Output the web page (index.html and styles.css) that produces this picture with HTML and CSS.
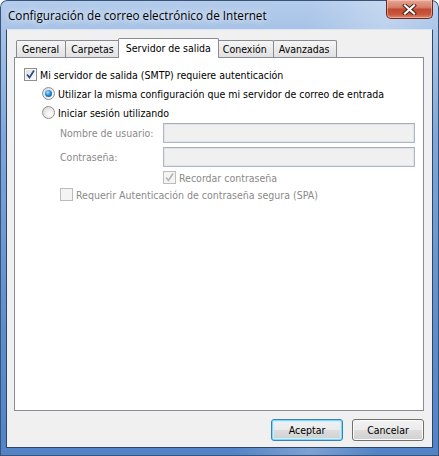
FILE: index.html
```html
<!DOCTYPE html>
<html lang="es">
<head>
<meta charset="utf-8">
<title>Configuración de correo electrónico de Internet</title>
<link rel="stylesheet" href="styles.css">
</head>
<body>
<div class="window">
  <div class="titlebar">
    <span class="title">Configuración de correo electrónico de Internet</span>
    <div class="close">
      <svg width="15" height="11" viewBox="0 0 15 11">
        <path d="M3 1.5 L12 9.5 M12 1.5 L3 9.5" stroke="#4a1a12" stroke-width="4" stroke-linecap="square"/>
        <path d="M3 1.5 L12 9.5 M12 1.5 L3 9.5" stroke="#ffffff" stroke-width="2.2" stroke-linecap="square"/>
      </svg>
    </div>
  </div>
  <div class="client">
    <div class="tabs">
      <div class="tab">General</div>
      <div class="tab">Carpetas</div>
      <div class="tab selected">Servidor de salida</div>
      <div class="tab">Conexión</div>
      <div class="tab">Avanzadas</div>
    </div>
    <div class="panel">
      <div class="row">
        <span class="cb">
          <svg width="11" height="11" viewBox="0 0 11 11"><path d="M2 5.5 L4.5 8.5 L9 1.5" fill="none" stroke="#2b4a86" stroke-width="1.7"/></svg>
        </span>
        <span>Mi servidor de salida (SMTP) requiere autenticación</span>
      </div>
      <div class="row indent">
        <span class="radio on"></span>
        <span>Utilizar la misma configuración que mi servidor de correo de entrada</span>
      </div>
      <div class="row indent">
        <span class="radio"></span>
        <span>Iniciar sesión utilizando</span>
      </div>
      <div class="form">
        <span class="lbl">Nombre de usuario:</span>
        <span class="input"></span>
        <span class="lbl">Contraseña:</span>
        <span class="input"></span>
        <span></span>
        <div class="sub">
          <span class="cb dis">
            <svg width="11" height="11" viewBox="0 0 11 11"><path d="M2 5.5 L4.5 8.5 L9 1.5" fill="none" stroke="#b4b4b4" stroke-width="1.6"/></svg>
          </span>
          <span class="gray">Recordar contraseña</span>
        </div>
      </div>
      <div class="sub spa">
        <span class="cb dis"></span>
        <span class="gray">Requerir Autenticación de contraseña segura (SPA)</span>
      </div>
    </div>
    <div class="buttons">
      <button class="btn default">Aceptar</button>
      <button class="btn">Cancelar</button>
    </div>
  </div>
</div>
</body>
</html>
```

FILE: styles.css
```css
html, body {
  margin: 0;
  padding: 0;
}
body {
  width: 439px;
  height: 456px;
  overflow: hidden;
  background: #ffffff;
  font-family: "DejaVu Sans Condensed", "DejaVu Sans", sans-serif;
  font-size: 10.5px;
  color: #000;
}
.window {
  box-sizing: border-box;
  width: 439px;
  height: 456px;
  display: flex;
  flex-direction: column;
  padding: 0 6px 8px 6px;
  border-radius: 7px 7px 0 0;
  background:
    linear-gradient(100deg, rgba(255,255,255,0) 60%, rgba(255,255,255,0.25) 75%, rgba(255,255,255,0) 88%),
    linear-gradient(180deg, #b5cdec 0, #a7c3e7 29px, #7ea6d8 140px, #5e8dcb 330px, #5183c6 100%);
  box-shadow: inset 0 0 0 1px #3a5478;
}
.titlebar {
  height: 29px;
  display: flex;
  justify-content: space-between;
  align-items: flex-start;
}
.title {
  margin: 7px 0 0 2px;
  font-family: "Open Sans", "Noto Sans", sans-serif;
  font-size: 11.7px;
  color: #000;
  text-shadow: 0 0 6px rgba(255,255,255,0.9), 0 0 10px rgba(255,255,255,0.7);
}
.close {
  box-sizing: border-box;
  width: 47px;
  height: 19px;
  display: flex;
  align-items: center;
  justify-content: center;
  border: 1px solid #6a2a20;
  border-top: none;
  border-radius: 0 0 5px 5px;
  background: linear-gradient(180deg, #e7a592 0%, #d6806b 40%, #c04a32 52%, #c9573d 80%, #e08a6e 100%);
  box-shadow: inset 0 0 0 1px rgba(255,220,210,0.45);
}
.client {
  flex: 1;
  display: flex;
  flex-direction: column;
  background: #f0f0f0;
  border: 1px solid #2f4566;
  border-top-color: #dce6f2;
  padding: 8px 8px 6px 7px;
}
.tabs {
  display: flex;
  align-items: flex-end;
  height: 19px;
  margin-left: 2px;
  position: relative;
  z-index: 1;
}
.tab {
  box-sizing: border-box;
  height: 17px;
  padding: 0 6px 0 5px;
  display: flex;
  align-items: center;
  border: 1px solid #898c95;
  border-bottom: none;
  border-radius: 2px 2px 0 0;
  background: linear-gradient(180deg, #f5f5f5 0%, #ebebeb 50%, #e1e1e1 100%);
  margin-left: -1px;
}
.tab:first-child {
  margin-left: 0;
}
.tab.selected {
  height: 20px;
  margin: 0 -2px -1px -3px;
  padding: 0 7px 2px 7px;
  background: #ffffff;
  position: relative;
  z-index: 2;
}
.tab.selected + .tab {
  margin-left: 0;
}
.panel {
  box-sizing: border-box;
  height: 354px;
  background: #ffffff;
  border: 1px solid #898c95;
  padding: 7px 0 0 9px;
}
.row {
  display: flex;
  align-items: center;
  gap: 3px;
  height: 19px;
}
.indent {
  margin-left: 18px;
}
.cb {
  box-sizing: border-box;
  width: 13px;
  height: 13px;
  flex: none;
  display: flex;
  align-items: center;
  justify-content: center;
  border: 1px solid #8e8f8f;
  background: linear-gradient(135deg, #dadbdc 0%, #f0f0f0 55%, #ffffff 100%);
  box-shadow: inset 0 0 0 1px #f6f6f6;
}
.cb.dis {
  border-color: #bcbcbc;
  background: #f4f4f4;
  box-shadow: none;
}
.radio {
  box-sizing: border-box;
  width: 13px;
  height: 13px;
  flex: none;
  border-radius: 50%;
  border: 1px solid #8e8f8f;
  background: radial-gradient(circle at 65% 65%, #ffffff 0%, #ececec 45%, #cfd0d1 100%);
  display: flex;
  align-items: center;
  justify-content: center;
}
.radio.on::after {
  content: "";
  width: 7px;
  height: 7px;
  border-radius: 50%;
  background: radial-gradient(circle at 40% 35%, #aee6ff 0%, #2b96e6 40%, #12539a 80%, #0e3d75 100%);
}
.form {
  display: grid;
  grid-template-columns: 103px 252px;
  grid-template-rows: 20px 20px 13px;
  row-gap: 4px;
  margin: 1px 0 0 36px;
}
.lbl {
  color: #8a8a8a;
  align-self: center;
}
.input {
  box-sizing: border-box;
  border: 1px solid #adb6c1;
  border-top-color: #a4adb8;
  background: #f0f0f0;
  box-shadow: inset 0 0 0 1px #dfe5ec;
}
.sub {
  display: flex;
  align-items: center;
  gap: 3px;
  height: 13px;
}
.spa {
  margin: 4px 0 0 36px;
}
.gray {
  color: #8a8a8a;
}
.buttons {
  display: flex;
  justify-content: flex-end;
  gap: 9px;
  margin-top: 8px;
}
.btn {
  box-sizing: border-box;
  width: 72px;
  height: 22px;
  padding: 0;
  font-family: inherit;
  font-size: 10.5px;
  color: #000;
  border: 1px solid #707070;
  border-radius: 3px;
  background: linear-gradient(180deg, #f2f2f2 0%, #ebebeb 48%, #dddddd 52%, #cfcfcf 100%);
  box-shadow: inset 0 0 0 1px #fbfbfb;
}
.btn.default {
  border-color: #3c7fb1;
  box-shadow: inset 0 0 0 1px #7fd8f8, inset 0 0 0 2px #c9effc;
}
```
